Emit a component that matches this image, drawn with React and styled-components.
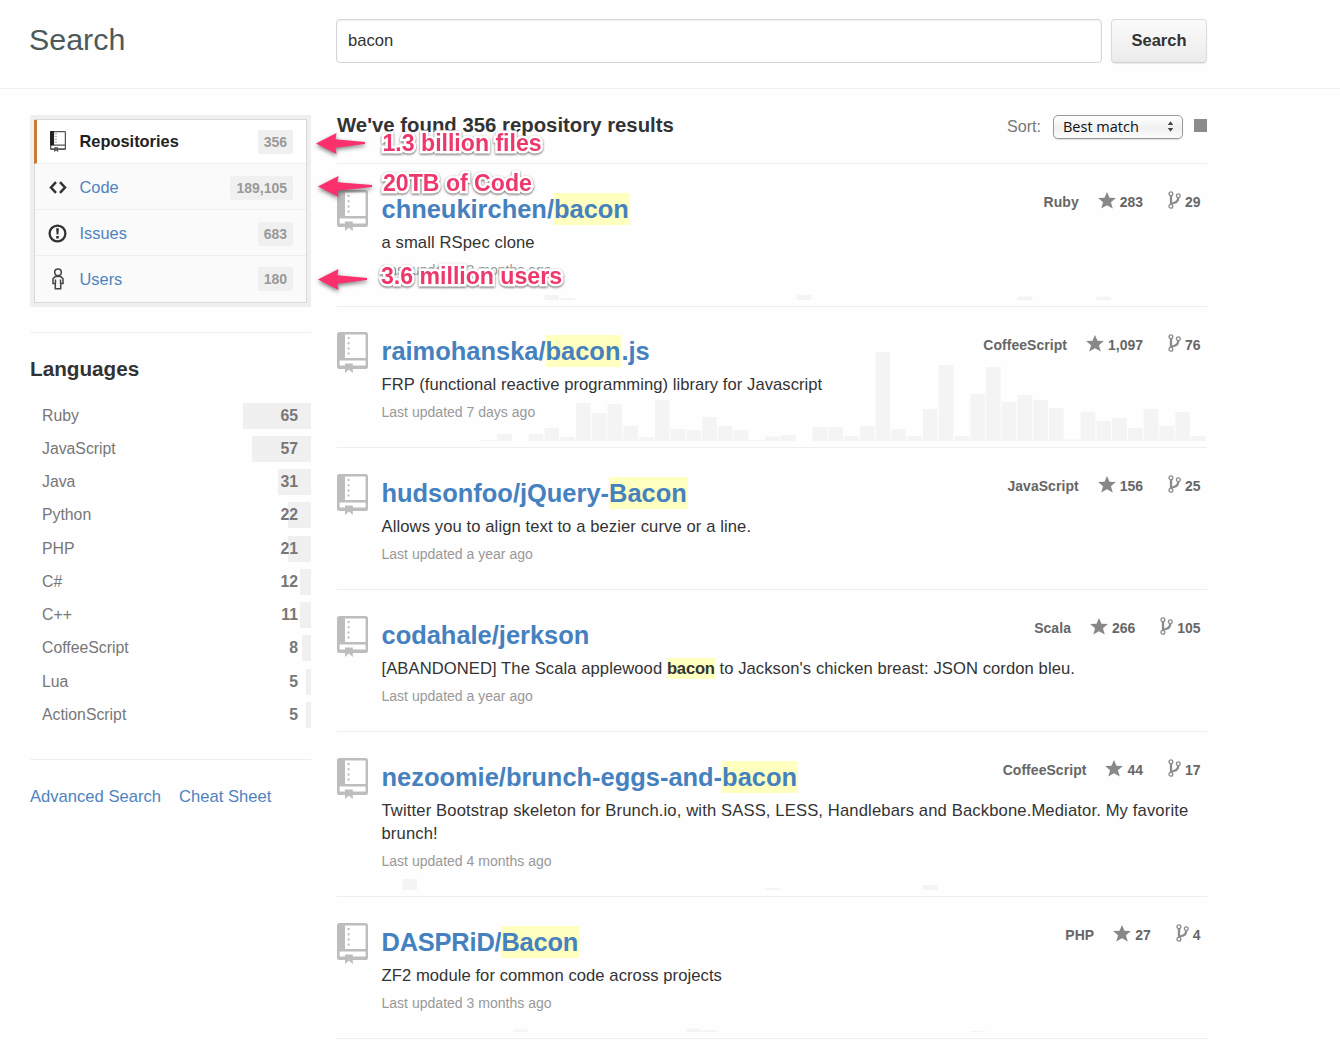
import React from 'react';
import styled, { createGlobalStyle } from 'styled-components';

const GlobalStyle = createGlobalStyle`
  * { box-sizing: border-box; }
  body {
    margin: 0;
    background: #fefefe;
    color: #333;
    font-family: "Liberation Sans", Arial, Helvetica, sans-serif;
    overflow: hidden;
  }
`;

const Page = styled.div`
  position: relative;
  height: 1042px;
  overflow: hidden;
`;

/* Header */
const Header = styled.header`
  display: flex;
  align-items: flex-start;
  height: 89px;
  padding: 19px 0 0 29px;
  border-bottom: 1px solid #f1f1f1;
`;
const PageTitle = styled.h1`
  width: 307px;
  margin: 0;
  font-size: 30.4px;
  font-weight: 400;
  line-height: 40px;
  color: #4c5a5b;
`;
const SearchForm = styled.div`
  display: flex;
  gap: 9px;
`;
const SearchInput = styled.div`
  width: 766px;
  height: 44px;
  padding: 1px 11px 0;
  border: 1.6px solid #d5d5d5;
  border-radius: 4px;
  background: #fff;
  box-shadow: inset 0 1px 2px rgba(0, 0, 0, 0.07);
  font-size: 16.6px;
  line-height: 40px;
`;
const SearchButton = styled.button`
  width: 96px;
  height: 44px;
  padding: 0 0 2px;
  border: 1px solid #dcdcdc;
  border-bottom-color: #cfcfcf;
  border-radius: 4px;
  background: linear-gradient(#fbfbfb, #ebebeb);
  box-shadow: 0 1px 1px rgba(0, 0, 0, 0.08);
  color: #333;
  font: bold 16.5px "Liberation Sans", Arial, sans-serif;
`;

const Columns = styled.div`
  display: flex;
  padding-left: 30px;
`;

/* Sidebar */
const Sidebar = styled.aside`
  width: 281px;
  margin-right: 26px;
  padding-top: 26px;
`;
const Menu = styled.nav`
  height: 192px;
  border: 4px solid #efefef;
  background: #efefef;
`;
const MenuInner = styled.div`
  height: 184px;
  border: 1px solid #d8d8d8;
  background: #fafafa;
`;
const MenuRow = styled.a`
  display: flex;
  align-items: center;
  height: ${(p) => (p.$active ? 44 : 46)}px;
  padding-top: ${(p) => (p.$active ? 0 : 2)}px;
  padding-right: 13px;
  padding-left: ${(p) => (p.$active ? 11 : 13)}px;
  margin-left: ${(p) => (p.$active ? -1 : 0)}px;
  border-bottom: 1px solid #eee;
  border-left: ${(p) => (p.$active ? '3px solid #ca7a37' : '0')};
  background: ${(p) => (p.$active ? '#fff' : 'transparent')};
  color: ${(p) => (p.$active ? '#222' : '#4f83c0')};
  font-size: 16.4px;
  font-weight: ${(p) => (p.$active ? 700 : 400)};
  &:last-child { padding-top: 0; border-bottom: 0; }
`;
const MenuIcon = styled.span`
  display: flex;
  justify-content: center;
  width: 19px;
  margin-right: 12.5px;
`;
const MenuLabel = styled.span`
  flex: 1;
`;
const Count = styled.span`
  height: 24px;
  padding: 0 6px;
  border-radius: 2px;
  background: #f0f0f0;
  color: #999;
  font-size: 14px;
  font-weight: 700;
  line-height: 24px;
`;
const SideSection = styled.section`
  border-top: 1px solid #efefef;
`;
const Languages = styled(SideSection)`
  height: 427px;
  margin-top: 25px;
  padding-top: 23px;
`;
const SideTitle = styled.h2`
  margin: 0 0 20.5px;
  font-size: 20.7px;
  line-height: 26px;
`;
const LanguageRow = styled.div`
  display: flex;
  justify-content: space-between;
  align-items: center;
  height: 26px;
  margin-bottom: 7.25px;
  padding: 0 13px 0 12px;
  background: linear-gradient(#f0f0f0, #f0f0f0) right / ${(p) => p.$bar}px 100% no-repeat;
  color: #777;
  font-size: 15.8px;
`;
const Links = styled(SideSection)`
  display: flex;
  gap: 18px;
  padding-top: 25px;
  color: #4f83c0;
  font-size: 16.6px;
  line-height: 23px;
`;

/* Results */
const Main = styled.main`
  width: 870px;
`;
const ResultsBar = styled.div`
  display: flex;
  align-items: flex-start;
  height: 75px;
  padding-top: 23px;
  border-bottom: 1px solid #eee;
`;
const ResultsTitle = styled.h2`
  flex: 1;
  margin: 0;
  font-size: 20.35px;
  line-height: 26px;
`;
const SortLabel = styled.span`
  margin-right: 12px;
  color: #777;
  font-size: 16.1px;
  line-height: 28px;
`;
const SortSelect = styled.div`
  display: flex;
  justify-content: space-between;
  align-items: center;
  width: 130px;
  height: 24px;
  margin-top: 3px;
  padding: 0 8px 2px 9px;
  border: 1px solid #999;
  border-radius: 5px;
  background: linear-gradient(#fff, #f0f0f0 55%, #fcfcfc);
  box-shadow: 0 1px 1px rgba(0, 0, 0, 0.12);
  color: #111;
  font-family: "Open Sans", sans-serif;
  font-size: 14.5px;
`;
const Square = styled.span`
  width: 13px;
  height: 13px;
  margin: 7px 0 0 11px;
  background: #8b8b8b;
`;
const Item = styled.article`
  position: relative;
  display: flex;
  height: ${(p) => (p.$tall ? 165 : 142)}px;
  padding-top: 26px;
  border-bottom: 1px solid #eee;
  &:nth-child(2) { height: 143px; }
  &:nth-child(3) { height: 141px; padding-top: 25px; }
`;
const ItemIcon = styled.div`
  width: 45px;
  margin-left: -0.5px;
`;
const ItemBody = styled.div`
  flex: 1;
`;
const ItemTitle = styled.h3`
  margin: 3px 0 6px;
  color: #4581bf;
  font-size: 25.45px;
  line-height: 32px;
  letter-spacing: ${(p) => p.$tracking || 0}px;
`;
const Mark = styled.em`
  display: inline-block;
  height: 32px;
  padding-right: 1px;
  background: #ffffc0;
  font-style: normal;
`;
const Description = styled.p`
  margin: 0;
  font-size: 16.6px;
  letter-spacing: ${(p) => p.$tracking ?? 0.1}px;
  line-height: 23px;
`;
const Strong = styled.strong`
  padding: 1px 0;
  background: #ffffc0;
  letter-spacing: -0.2px;
`;
const Updated = styled.p`
  margin: 5px 0 0;
  color: #999;
  font-size: 14.04px;
  line-height: 23px;
`;
const Stats = styled.div`
  position: absolute;
  top: 26px;
  right: 6.5px;
  display: flex;
  align-items: center;
  height: 24px;
  color: #666;
  font-size: 13.95px;
  font-weight: 700;
`;
const Language = styled.span`
  letter-spacing: 0.08px;
`;
const Stat = styled.span`
  display: flex;
  align-items: center;
  gap: 4px;
  margin-left: ${(p) => p.$gap}px;
  svg { margin-bottom: 4px; }
`;
const Chart = styled.svg`
  position: absolute;
  right: 0.5px;
  bottom: 6px;
`;

/* Callouts over the page */
const Callout = styled.div`
  position: absolute;
  left: ${(p) => p.$x}px;
  top: ${(p) => p.$y}px;
  color: #ee376b;
  font-size: 23.1px;
  font-weight: 700;
  line-height: 26px;
  white-space: nowrap;
  -webkit-text-stroke: 5px #fff;
  paint-order: stroke fill;
  filter: drop-shadow(0 1.5px 1.2px rgba(0, 0, 0, 0.6));
`;
const ArrowShape = styled.svg`
  position: absolute;
  left: ${(p) => p.$x}px;
  top: ${(p) => p.$y}px;
  overflow: visible;
  filter: drop-shadow(0 2px 2px rgba(0, 0, 0, 0.5));
`;

const RepoIcon = ({ width = 31, color = '#bdbdbd', spine }) => (
  <svg width={width} height={(width * 41) / 31} viewBox="0 0 31 41">
    <rect width="31" height="37" rx="2.5" fill={color} />
    {spine && <rect width="8" height="28" rx="2" fill={spine} />}
    <path d="M8 2.4h20.6V26H8zM2.6 28.4h26v5h-26z" fill="#fff" />
    <path d="M8 31.5h7.8V41l-3.9-3.4L8 41z" fill={color} />
    <path d="M10.6 5h2v2h-2zM10.6 10.2h2v2h-2zM10.6 15.4h2v2h-2zM10.6 20.6h2v2h-2z" fill={color} />
  </svg>
);
const CodeIcon = () => (
  <svg width="18" height="13" viewBox="0 0 18 13" fill="none" stroke="#333" strokeWidth="2.5">
    <path d="M7 1.2 2 6.5l5 5.3M11 1.2l5 5.3-5 5.3" />
  </svg>
);
const IssueIcon = () => (
  <svg width="19" height="19" viewBox="0 0 19 19">
    <circle cx="9.5" cy="9.5" r="7.9" fill="none" stroke="#333" strokeWidth="2.3" />
    <path d="M8.1 4.2h2.8l-.5 6.4H8.6zM8.2 12h2.6v2.4H8.2z" fill="#333" />
  </svg>
);
const PersonIcon = () => (
  <svg width="12" height="22" viewBox="0 0 12 22" fill="none" stroke="#444" strokeWidth="1.5">
    <circle cx="6" cy="4.2" r="3.3" />
    <path d="M3.2 8.6h5.6L11 10.8v4.6H8.7v5.4H3.3v-5.4H1v-4.6zM3.5 11.5v4M8.5 11.5v4" />
  </svg>
);
const StarIcon = () => (
  <svg width="18" height="17" viewBox="0 0 18 17">
    <path fill="#888" d="M9 0l2.5 5.7 6.4.4-5 4.1 1.9 6.4L9 13.2l-5.8 3.4 1.9-6.4-5-4.1 6.4-.4z" />
  </svg>
);
const ForkIcon = () => (
  <svg width="13" height="18" viewBox="0 0 13 18" fill="none" stroke="#8a8a8a">
    <path d="M3 4.6v8.8M10.2 6.8c0 3.6-1.8 4.6-4.4 5.2-1.4.3-2.2.6-2.6 1.4" strokeWidth="2.3" />
    <g strokeWidth="1.3">
      <circle cx="2.9" cy="2.7" r="1.9" />
      <circle cx="10.3" cy="4.8" r="1.9" />
      <circle cx="2.9" cy="15.2" r="1.9" />
    </g>
  </svg>
);
const SelectArrows = () => (
  <svg width="7" height="11" viewBox="0 0 7 11" fill="#444">
    <path d="M3.5 0.3l2.7 3.8H.8zM3.5 10.7l2.7-3.8H.8z" />
  </svg>
);
const Arrow = ({ x, y, length = 49 }) => (
  <ArrowShape $x={x} $y={y} width={length} height="21">
    <path
      fill="#fc306d"
      d={`M0 10.5 20.5 0 19.5 6.2 ${length} 9v2L19.5 14.8l1 6.2z`}
    />
  </ArrowShape>
);

const PITCH = 15.77;
const WEEKS = 52;

/* Each bar is a pair: weeks before now, height in pixels. */
const Activity = ({ bars }) => (
  <Chart width={WEEKS * PITCH} height="92" fill="#f4f4f4">
    {bars.map(([week, height]) => (
      <rect
        key={week}
        x={WEEKS * PITCH - 15 - week * PITCH}
        y={92 - height}
        width="14.6"
        height={height}
      />
    ))}
  </Chart>
);

const MENU = [
  { label: 'Repositories', count: '356', icon: <RepoIcon width={16} color="#555" spine="#222" />, active: true },
  { label: 'Code', count: '189,105', icon: <CodeIcon /> },
  { label: 'Issues', count: '683', icon: <IssueIcon /> },
  { label: 'Users', count: '180', icon: <PersonIcon /> },
];

const LANGUAGES = [
  ['Ruby', 65, 68],
  ['JavaScript', 57, 59],
  ['Java', 31, 33.5],
  ['Python', 22, 23],
  ['PHP', 21, 23],
  ['C#', 12, 11],
  ['C++', 11, 11],
  ['CoffeeScript', 8, 9],
  ['Lua', 5, 5],
  ['ActionScript', 5, 5],
];

const REPOS = [
  {
    title: <>chneukirchen/<Mark>bacon</Mark></>,
    text: 'a small RSpec clone',
    updated: '3 months ago', language: 'Ruby', stars: '283', forks: '29',
    bars: [[41, 5], [40, 2], [25, 5], [11, 3.5], [6, 3.5]],
  },
  {
    title: <>raimohanska/<Mark>bacon</Mark>.js</>,
    text: 'FRP (functional reactive programming) library for Javascript',
    tracking: 0.05,
    updated: '7 days ago', language: 'CoffeeScript', stars: '1,097', forks: '76',
    bars: [
      [45, 1], [44, 7], [42, 7], [41, 13], [40, 4], [39, 38], [38, 28], [37, 37], [36, 15], [35, 4],
      [34, 41], [33, 12], [32, 11], [31, 24], [30, 15], [29, 11], [28, 1], [27, 4.5], [26, 6],
      [24, 14], [23, 14], [22, 5], [21, 15], [20, 89], [19, 12], [18, 5], [17, 32], [16, 76], [15, 5],
      [14, 47], [13, 74], [12, 39], [11, 46], [10, 41], [9, 33], [8, 1.5], [7, 29], [6, 20], [5, 23],
      [4, 13], [3, 32], [2, 15], [1, 29], [0, 5],
    ],
  },
  {
    title: <>hudsonfoo/jQuery-<Mark>Bacon</Mark></>,
    text: 'Allows you to align text to a bezier curve or a line.',
    updated: 'a year ago', language: 'JavaScript', stars: '156', forks: '25',
    bars: [],
  },
  {
    title: 'codahale/jerkson',
    text: <>[ABANDONED] The Scala applewood <Strong>bacon</Strong> to Jackson's chicken breast: JSON cordon bleu.</>,
    tracking: 0.08,
    updated: 'a year ago', language: 'Scala', stars: '266', forks: '105',
    bars: [],
  },
  {
    title: <>nezoomie/brunch-eggs-and-<Mark>bacon</Mark></>,
    text: 'Twitter Bootstrap skeleton for Brunch.io, with SASS, LESS, Handlebars and Backbone.Mediator. My favorite brunch!',
    tracking: 0.14,
    tall: true,
    updated: '4 months ago', language: 'CoffeeScript', stars: '44', forks: '17',
    bars: [[50, 11], [27, 2], [17, 5]],
  },
  {
    title: <>DASPRiD/<Mark>Bacon</Mark></>,
    text: 'ZF2 module for common code across projects',
    tracking: 0.07,
    titleTracking: -0.2,
    updated: '3 months ago', language: 'PHP', stars: '27', forks: '4',
    bars: [[43, 2.5], [32, 3.5], [31, 2], [14, 1]],
  },
];

export default function App() {
  return (
    <Page>
      <GlobalStyle />
      <Header>
        <PageTitle>Search</PageTitle>
        <SearchForm>
          <SearchInput>bacon</SearchInput>
          <SearchButton>Search</SearchButton>
        </SearchForm>
      </Header>
      <Columns>
        <Sidebar>
          <Menu>
            <MenuInner>
              {MENU.map((m) => (
                <MenuRow key={m.label} $active={m.active}>
                  <MenuIcon>{m.icon}</MenuIcon>
                  <MenuLabel>{m.label}</MenuLabel>
                  <Count>{m.count}</Count>
                </MenuRow>
              ))}
            </MenuInner>
          </Menu>
          <Languages>
            <SideTitle>Languages</SideTitle>
            {LANGUAGES.map(([name, count, bar]) => (
              <LanguageRow key={name} $bar={bar}>
                <span>{name}</span>
                <b>{count}</b>
              </LanguageRow>
            ))}
          </Languages>
          <Links>
            <span>Advanced Search</span>
            <span>Cheat Sheet</span>
          </Links>
        </Sidebar>
        <Main>
          <ResultsBar>
            <ResultsTitle>We've found 356 repository results</ResultsTitle>
            <SortLabel>Sort:</SortLabel>
            <SortSelect>
              <span>Best match</span>
              <SelectArrows />
            </SortSelect>
            <Square />
          </ResultsBar>
          {REPOS.map((r, i) => (
            <Item key={i} $tall={r.tall}>
              <Activity bars={r.bars} />
              <ItemIcon><RepoIcon /></ItemIcon>
              <ItemBody>
                <ItemTitle $tracking={r.titleTracking}>{r.title}</ItemTitle>
                <Description $tracking={r.tracking}>{r.text}</Description>
                <Updated>Last updated {r.updated}</Updated>
              </ItemBody>
              <Stats>
                <Language>{r.language}</Language>
                <Stat $gap={19}><StarIcon />{r.stars}</Stat>
                <Stat $gap={25}><ForkIcon />{r.forks}</Stat>
              </Stats>
            </Item>
          ))}
        </Main>
      </Columns>
      <Arrow x={315.5} y={133} />
      <Arrow x={317.5} y={176} length={54} />
      <Arrow x={317.5} y={269} />
      <Callout $x={382.5} $y={130}>1.3 billion files</Callout>
      <Callout $x={383} $y={170}>20TB of Code</Callout>
      <Callout $x={381} $y={263}>3.6 million users</Callout>
    </Page>
  );
}
